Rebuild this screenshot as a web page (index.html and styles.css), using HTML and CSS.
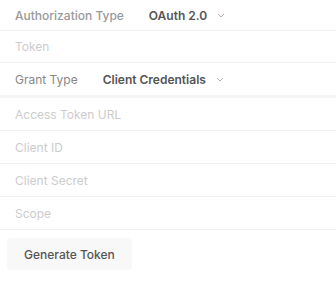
FILE: index.html
```html
<!DOCTYPE html>
<html lang="en">
<head>
<meta charset="UTF-8">
<meta name="viewport" content="width=device-width, initial-scale=1.0">
<title>Authorization</title>
<link rel="stylesheet" href="styles.css">
</head>
<body>
    <div class="auth">
        <div class="row row-first">
            <span class="label">Authorization Type</span>
            <span class="select">OAuth 2.0
                <svg class="chevron" width="8" height="5" viewBox="0 0 8 5"><path d="M1 1l3 3 3-3" fill="none" stroke="#b0b0b0" stroke-width="1"/></svg>
            </span>
        </div>
        <div class="row row-token">
            <input class="field" type="text" placeholder="Token">
        </div>
        <div class="row row-group">
            <span class="label label-plain">Grant Type</span>
            <span class="select">Client Credentials
                <svg class="chevron" width="8" height="5" viewBox="0 0 8 5"><path d="M1 1l3 3 3-3" fill="none" stroke="#b0b0b0" stroke-width="1"/></svg>
            </span>
        </div>
        <div class="row">
            <input class="field" type="text" placeholder="Access Token URL">
        </div>
        <div class="row">
            <input class="field" type="text" placeholder="Client ID">
        </div>
        <div class="row">
            <input class="field" type="text" placeholder="Client Secret">
        </div>
        <div class="row">
            <input class="field" type="text" placeholder="Scope">
        </div>
        <button class="generate">Generate Token</button>
    </div>
</body>
</html>
```

FILE: styles.css
```css
body {
    margin: 0;
    font-family: Inter, "Noto Sans", sans-serif;
    font-size: 12px;
    background-color: #fff;
}

.auth {
    display: flex;
    flex-direction: column;
    align-items: flex-start;
}

.row {
    display: flex;
    align-items: center;
    width: 100%;
    height: 33px;
    padding: 0 15px;
    box-sizing: border-box;
    border-bottom: 1px solid #f0f0f0;
}

.row-first {
    height: 31px;
}

.row-token {
    height: 32px;
}

.row-group {
    height: 35px;
    border-bottom: 3px solid #f5f5f5;
}

.label {
    color: #999;
    font-weight: 500;
    margin-right: 25px;
}

.label-plain {
    color: #888;
    font-weight: 400;
}

.select {
    display: flex;
    align-items: center;
    gap: 10px;
    color: #555;
    font-weight: 600;
}

.field {
    border: none;
    outline: none;
    padding: 0;
    width: 100%;
    font-family: inherit;
    font-size: 12px;
    color: #555;
    background: transparent;
}

.field::placeholder {
    color: #ccc;
}

.generate {
    margin: 8px 0 0 7px;
    height: 32px;
    padding: 0 17px;
    border: none;
    border-radius: 4px;
    background-color: #f8f8f8;
    color: #555;
    font-family: inherit;
    font-size: 12px;
    font-weight: 500;
    cursor: pointer;
}
```
